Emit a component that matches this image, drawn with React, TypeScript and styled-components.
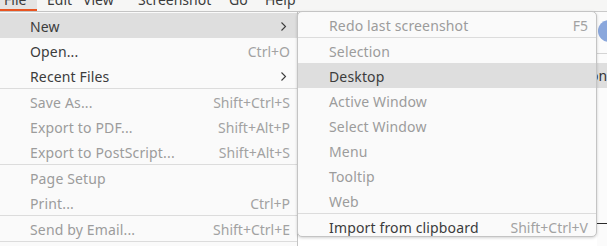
import React from "react";
import styled, { createGlobalStyle } from "styled-components";

const Global = createGlobalStyle`
  html, body { margin: 0; padding: 0; background: #ffffff; }
  body { width: 607px; height: 246px; overflow: hidden; font-family: "Noto Sans", "DejaVu Sans", sans-serif; }
`;

const Page = styled.div`
  position: relative;
  width: 607px;
  height: 246px;
  overflow: hidden;
  background: #ffffff;
  display: flex;
  flex-direction: column;
`;

const MenuBar = styled.div`
  height: 11px;
  flex: none;
  background: #f6f6f5;
  display: flex;
  align-items: flex-end;
  overflow: hidden;
  font-size: 14px;
  color: #3c3c3c;
`;

const BarItem = styled.div<{ $active?: boolean; $w: number; $pl: number }>`
  width: ${(p) => p.$w}px;
  padding-left: ${(p) => p.$pl}px;
  flex: none;
  height: 11px;
  box-sizing: border-box;
  display: flex;
  justify-content: flex-start;
  align-items: flex-end;
  background: ${(p) => (p.$active ? "#e4e4e3" : "transparent")};
  border-bottom: 2px solid ${(p) => (p.$active ? "#e95420" : "transparent")};
  span { line-height: 20px; margin-bottom: -1px; white-space: nowrap; }
`;

const Content = styled.div`
  flex: 1;
  display: grid;
  grid-template-columns: 597px 10px;
  border-top: 1px solid #c9c9c9;
`;

const SideStrip = styled.div`
  display: flex;
  flex-direction: column;
  background: #fbfbfb;
  overflow: hidden;
`;

const BlueDot = styled.div`
  width: 22px;
  height: 22px;
  margin: 8px 0 0 1px;
  border-radius: 50%;
  background: #8aa7dc;
  flex: none;
`;

const StripLine = styled.div<{ $top: number; $color: string }>`
  margin-top: ${(p) => p.$top}px;
  height: 1px;
  background: ${(p) => p.$color};
  flex: none;
`;

const StripBand = styled.div`
  margin-top: 9px;
  height: 25px;
  background: #dedede;
  color: #333;
  font-size: 14px;
  line-height: 25px;
  text-indent: -7px;
  flex: none;
  white-space: nowrap;
`;

const Menu = styled.div<{ $left: number; $width: number; $height: number; $round?: boolean; $padTop?: number }>`
  position: absolute;
  top: 11px;
  left: ${(p) => p.$left}px;
  width: ${(p) => p.$width}px;
  height: ${(p) => p.$height}px;
  box-sizing: border-box;
  background: #fafafa;
  border: 1px solid #c4c4c4;
  border-radius: ${(p) => (p.$round ? "5px" : "0")};
  padding-top: ${(p) => p.$padTop ?? 0}px;
  overflow: hidden;
  display: flex;
  flex-direction: column;
  box-shadow: ${(p) => (p.$round ? "0 1px 3px rgba(0,0,0,0.18)" : "none")};
  font-size: 14px;
`;

const Row = styled.div<{ $hl?: boolean; $disabled?: boolean; $indent: number; $padR: number }>`
  height: 25px;
  flex: none;
  display: flex;
  align-items: center;
  justify-content: space-between;
  box-sizing: border-box;
  padding: 1px ${(p) => p.$padR}px 0 ${(p) => p.$indent}px;
  background: ${(p) => (p.$hl ? "#dedede" : "transparent")};
  color: ${(p) => (p.$disabled ? "#9c9c9c" : "#3c3c3c")};
  white-space: nowrap;
`;

const Label = styled.span`
  letter-spacing: 0.15px;
`;

const Accel = styled.span`
  color: #a2a2a2;
`;

const Sep = styled.div`
  height: 1px;
  flex: none;
  background: #dcdcdc;
`;

const Chevron = () => (
  <svg width="7" height="11" viewBox="0 0 7 11" style={{ marginRight: 3 }}>
    <path d="M1.5 1.5 L5.5 5.5 L1.5 9.5" fill="none" stroke="#3c3c3c" strokeWidth="1.1" />
  </svg>
);

type Item = { label: string; accel?: string; sub?: boolean; disabled?: boolean; hl?: boolean } | "sep";

const fileItems: Item[] = [
  { label: "New", sub: true, hl: true },
  { label: "Open...", accel: "Ctrl+O" },
  { label: "Recent Files", sub: true },
  "sep",
  { label: "Save As...", accel: "Shift+Ctrl+S", disabled: true },
  { label: "Export to PDF...", accel: "Shift+Alt+P", disabled: true },
  { label: "Export to PostScript...", accel: "Shift+Alt+S", disabled: true },
  "sep",
  { label: "Page Setup", disabled: true },
  { label: "Print...", accel: "Ctrl+P", disabled: true },
  "sep",
  { label: "Send by Email...", accel: "Shift+Ctrl+E", disabled: true },
  "sep",
  { label: "Close", disabled: true },
];

const newItems: Item[] = [
  { label: "Redo last screenshot", accel: "F5", disabled: true },
  "sep",
  { label: "Selection", disabled: true },
  { label: "Desktop", hl: true },
  { label: "Active Window", disabled: true },
  { label: "Select Window", disabled: true },
  { label: "Menu", disabled: true },
  { label: "Tooltip", disabled: true },
  { label: "Web", disabled: true },
  "sep",
  { label: "Import from clipboard", accel: "Shift+Ctrl+V" },
];

const renderItems = (items: Item[], indent: number, padR: number) =>
  items.map((it, i) =>
    it === "sep" ? (
      <Sep key={i} />
    ) : (
      <Row key={i} $hl={it.hl} $disabled={it.disabled} $indent={indent} $padR={padR}>
        <Label>{it.label}</Label>
        {it.sub ? <Chevron /> : it.accel ? <Accel>{it.accel}</Accel> : null}
      </Row>
    )
  );

export default function App() {
  return (
    <Page>
      <Global />
      <MenuBar>
        <BarItem $active $w={37} $pl={4}><span>File</span></BarItem>
        <BarItem $w={41} $pl={10}><span>Edit</span></BarItem>
        <BarItem $w={56} $pl={5}><span>View</span></BarItem>
        <BarItem $w={88} $pl={4}><span>Screenshot</span></BarItem>
        <BarItem $w={38} $pl={7}><span>Go</span></BarItem>
        <BarItem $w={50} $pl={5}><span>Help</span></BarItem>
      </MenuBar>
      <Content>
        <div />
        <SideStrip>
          <BlueDot />
          <StripLine $top={11} $color="#d4d4d4" />
          <StripBand>on</StripBand>
          <StripLine $top={135} $color="#2a2a2a" />
        </SideStrip>
      </Content>
      <Menu $left={-2} $width={300} $height={300} $padTop={1}>
        {renderItems(fileItems, 31, 7)}
      </Menu>
      <Menu $left={297} $width={300} $height={226} $round>
        {renderItems(newItems, 31, 8)}
      </Menu>
    </Page>
  );
}
